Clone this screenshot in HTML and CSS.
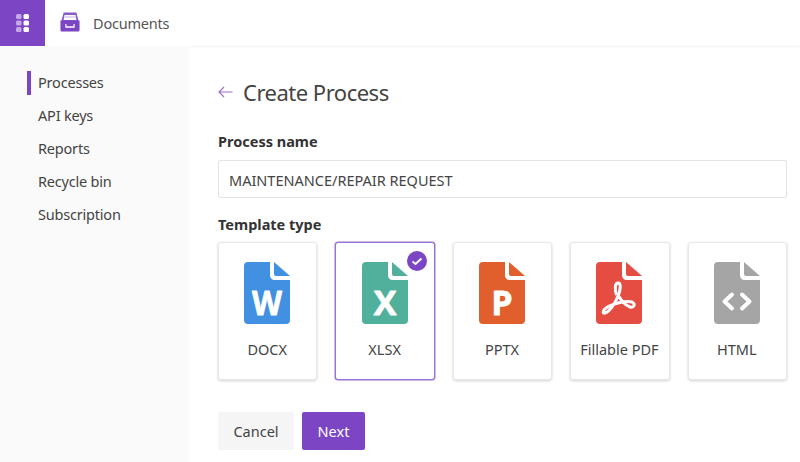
FILE: index.html
```html
<!DOCTYPE html>
<html lang="en">
<head>
    <meta charset="UTF-8">
    <title>Documents - Create Process</title>
    <link rel="stylesheet" href="styles.css">
</head>
<body>
    <header class="topbar">
        <div class="app-launcher">
            <svg width="14" height="18" viewBox="0 0 14 18">
                <rect class="dot-dim" x="0" y="0" width="5.5" height="5" rx="1.5"/>
                <rect class="dot" x="7.5" y="0" width="5.5" height="5" rx="1.5"/>
                <rect class="dot-dim" x="0" y="6.5" width="5.5" height="5" rx="1.5"/>
                <rect class="dot" x="7.5" y="6.5" width="5.5" height="5" rx="1.5"/>
                <rect class="dot-dim" x="0" y="13" width="5.5" height="5" rx="1.5"/>
                <rect class="dot" x="7.5" y="13" width="5.5" height="5" rx="1.5"/>
            </svg>
        </div>
        <svg class="app-logo" width="20" height="20" viewBox="0 0 22 20" preserveAspectRatio="none">
            <path fill="#8a5ac8" d="M4 0.5 H18 L20.5 9 H1.5 Z"/>
            <path fill="#fff" d="M5 3 H17 L18 8 H4 Z"/>
            <path fill="#c9b3e6" d="M5 4.5 H17 V5.5 H5 Z"/>
            <path fill="#7b45c4" d="M0.5 8.5 H21.5 V18 Q21.5 19.5 20 19.5 H2 Q0.5 19.5 0.5 18 Z"/>
            <path fill="none" stroke="#fff" stroke-width="1.3" d="M6.5 12 V15 H15.5 V12"/>
        </svg>
        <span class="app-name">Documents</span>
    </header>

    <div class="layout">
        <nav class="sidebar">
            <a class="nav-item active">Processes</a>
            <a class="nav-item">API keys</a>
            <a class="nav-item">Reports</a>
            <a class="nav-item">Recycle bin</a>
            <a class="nav-item">Subscription</a>
        </nav>

        <main class="content">
            <div class="page-title">
                <svg class="back-arrow" width="15" height="12" viewBox="0 0 15 12">
                    <path d="M14.5 6 H1 M6 1 L1 6 L6 11"/>
                </svg>
                <h1>Create Process</h1>
            </div>

            <label class="field-label">Process name</label>
            <input class="text-input" type="text" value="MAINTENANCE/REPAIR REQUEST">

            <label class="field-label type-label">Template type</label>
            <div class="template-row">
                <div class="template-card">
                    <svg class="file-icon" viewBox="0 0 46 62">
                        <path fill="#4190e2" d="M4 0 H26 V13 Q26 18 31 18 H46 V58 Q46 62 42 62 H4 Q0 62 0 58 V4 Q0 0 4 0 Z"/>
                        <path fill="#4190e2" d="M30 0 L46 14 H32 Q30 14 30 12 Z"/>
                        <text class="file-letter" x="23" y="53" font-size="34" textLength="30" lengthAdjust="spacingAndGlyphs">W</text>
                    </svg>
                    <span>DOCX</span>
                </div>
                <div class="template-card selected">
                    <svg class="check-badge" width="20" height="20" viewBox="0 0 20 20">
                        <circle cx="10" cy="10" r="10" fill="#7b45c4"/>
                        <path d="M5.5 10.5 L8.5 13 L14.5 7.5" fill="none" stroke="#fff" stroke-width="2"/>
                    </svg>
                    <svg class="file-icon" viewBox="0 0 46 62">
                        <path fill="#51b09b" d="M4 0 H26 V13 Q26 18 31 18 H46 V58 Q46 62 42 62 H4 Q0 62 0 58 V4 Q0 0 4 0 Z"/>
                        <path fill="#51b09b" d="M30 0 L46 14 H32 Q30 14 30 12 Z"/>
                        <text class="file-letter" x="23" y="53" font-size="34">X</text>
                    </svg>
                    <span>XLSX</span>
                </div>
                <div class="template-card">
                    <svg class="file-icon" viewBox="0 0 46 62">
                        <path fill="#e05f2c" d="M4 0 H26 V13 Q26 18 31 18 H46 V58 Q46 62 42 62 H4 Q0 62 0 58 V4 Q0 0 4 0 Z"/>
                        <path fill="#e05f2c" d="M30 0 L46 14 H32 Q30 14 30 12 Z"/>
                        <text class="file-letter" x="23" y="53" font-size="34">P</text>
                    </svg>
                    <span>PPTX</span>
                </div>
                <div class="template-card">
                    <svg class="file-icon" viewBox="0 0 46 62">
                        <path fill="#e54d42" d="M4 0 H26 V13 Q26 18 31 18 H46 V58 Q46 62 42 62 H4 Q0 62 0 58 V4 Q0 0 4 0 Z"/>
                        <path fill="#e54d42" d="M30 0 L46 14 H32 Q30 14 30 12 Z"/>
                        <path fill="none" stroke="#fff" stroke-width="3" d="M20.5 33 C18.5 27 19 21 22 21 C25 21 25 27 22 34 C19 42 13 50 9 51 C6 52 7 48 10 46 C16 42 30 38 36 40 C40 42 38 46 34 45 C28 43 25 38 22 33"/>
                    </svg>
                    <span>Fillable PDF</span>
                </div>
                <div class="template-card">
                    <svg class="file-icon" viewBox="0 0 46 62">
                        <path fill="#a5a5a5" d="M4 0 H26 V13 Q26 18 31 18 H46 V58 Q46 62 42 62 H4 Q0 62 0 58 V4 Q0 0 4 0 Z"/>
                        <path fill="#a5a5a5" d="M30 0 L46 14 H32 Q30 14 30 12 Z"/>
                        <path fill="none" stroke="#fff" stroke-width="4" stroke-linecap="round" stroke-linejoin="round" d="M18 32.5 L10.5 39.5 L18 46.5 M28 32.5 L35.5 39.5 L28 46.5"/>
                    </svg>
                    <span>HTML</span>
                </div>
            </div>

            <div class="actions">
                <button class="btn btn-cancel">Cancel</button>
                <button class="btn btn-next">Next</button>
            </div>
        </main>
    </div>
</body>
</html>
```

FILE: styles.css
```css
* {
    box-sizing: border-box;
}

html,
body {
    height: 100%;
}

body {
    margin: 0;
    overflow: hidden;
    display: flex;
    flex-direction: column;
    font-family: "Noto Sans", "Open Sans", sans-serif;
    font-size: 14.5px;
    color: #444;
    background: #fff;
}

.topbar {
    display: flex;
    align-items: center;
    height: 46px;
    flex-shrink: 0;
    box-shadow: 0 1px 2px rgba(0, 0, 0, 0.06);
}

.app-launcher {
    display: flex;
    align-items: center;
    justify-content: center;
    width: 45px;
    height: 46px;
    background: #7b45c4;
}

.dot {
    fill: #fff;
}

.dot-dim {
    fill: #c4a8e8;
}

.app-logo {
    margin-left: 15px;
    margin-bottom: 2px;
}

.app-name {
    margin-left: 13px;
    font-size: 14.5px;
    letter-spacing: -0.2px;
    color: #555;
}

.layout {
    display: flex;
    flex: 1;
}

.sidebar {
    width: 189px;
    padding-top: 20px;
    padding-left: 27px;
    background: #fafafa;
}

.nav-item {
    display: flex;
    align-items: center;
    height: 33px;
    padding-left: 11px;
    padding-bottom: 1px;
    letter-spacing: -0.2px;
    color: #444;
}

.nav-item.active {
    position: relative;
}

.nav-item.active::before {
    content: "";
    position: absolute;
    left: 0;
    top: 5px;
    width: 4px;
    height: 24px;
    background: #7b45c4;
}

.content {
    flex: 1;
    padding: 28px 13px 0 29px;
}

.page-title {
    display: flex;
    align-items: center;
    gap: 10px;
    height: 36px;
    margin-bottom: 21px;
}

.page-title h1 {
    margin: 0;
    font-size: 22px;
    font-weight: 400;
    letter-spacing: -0.5px;
    color: #444;
}

.back-arrow path {
    fill: none;
    stroke: #9a6fd4;
    stroke-width: 1.2;
}

.field-label {
    display: block;
    height: 29px;
    font-weight: 700;
    font-size: 14.5px;
    line-height: 20px;
    color: #333;
}

.type-label {
    margin-top: 16px;
    height: 28px;
}

.text-input {
    display: block;
    width: 100%;
    height: 38px;
    padding: 1px 10px 0;
    border: 1px solid #e3e3e3;
    border-radius: 2px;
    font-family: inherit;
    font-size: 14.5px;
    color: #444;
}

.template-row {
    display: flex;
    gap: 18px;
}

.template-card {
    position: relative;
    flex: 1;
    display: flex;
    flex-direction: column;
    align-items: center;
    height: 138px;
    padding: 19px 1px 0 0;
    border: 1px solid #e8e8e8;
    border-radius: 3px;
    box-shadow: 0 1px 3px rgba(0, 0, 0, 0.18);
    background: #fff;
}

.template-card span {
    margin-top: 15px;
    white-space: nowrap;
}

.template-card.selected {
    border: 1px solid #9a72d4;
    box-shadow: 0 0 0 0.5px #9a72d4;
}

.file-icon {
    width: 46px;
    height: 62px;
    flex-shrink: 0;
}

.file-letter {
    fill: #fff;
    stroke: #fff;
    stroke-width: 0.8;
    stroke-linejoin: round;
    font-family: "Open Sans", sans-serif;
    font-weight: 700;
    text-anchor: middle;
}

.check-badge {
    position: absolute;
    top: 8px;
    right: 7px;
}

.actions {
    display: flex;
    gap: 8px;
    margin-top: 32px;
}

.btn {
    height: 38px;
    border: none;
    border-radius: 2px;
    font-family: inherit;
    font-size: 14.5px;
}

.btn-cancel {
    width: 76px;
    background: #f5f5f5;
    color: #444;
}

.btn-next {
    width: 63px;
    background: #7b45c4;
    color: #fff;
}
```
